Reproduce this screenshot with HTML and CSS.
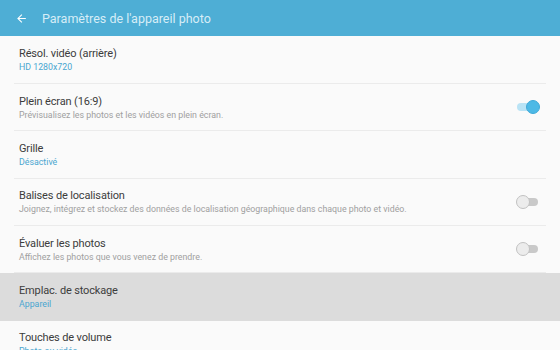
FILE: index.html
```html
<!DOCTYPE html>
<html lang="fr">
<head>
    <meta charset="UTF-8">
    <meta name="viewport" content="width=device-width, initial-scale=1.0">
    <title>Paramètres de l'appareil photo</title>
    <link rel="stylesheet" href="styles.css">
</head>
<body>
    <div class="header">
        <svg class="back-icon" viewBox="0 0 24 24">
            <path d="M20 11H7.8l5.6-5.6L12 4l-8 8 8 8 1.4-1.4L7.8 13H20z"/>
        </svg>
        <h3>Paramètres de l'appareil photo</h3>
    </div>

    <div class="settings-list">
        <div class="setting-row">
            <div class="setting-info">
                <h5>Résol. vidéo (arrière)</h5>
                <p class="value">HD 1280x720</p>
            </div>
        </div>

        <div class="setting-row">
            <div class="setting-info">
                <h5>Plein écran (16:9)</h5>
                <p>Prévisualisez les photos et les vidéos en plein écran.</p>
            </div>
            <div class="switch on"><span class="knob"></span></div>
        </div>

        <div class="setting-row">
            <div class="setting-info">
                <h5>Grille</h5>
                <p class="value">Désactivé</p>
            </div>
        </div>

        <div class="setting-row">
            <div class="setting-info">
                <h5>Balises de localisation</h5>
                <p>Joignez, intégrez et stockez des données de localisation géographique dans chaque photo et vidéo.</p>
            </div>
            <div class="switch"><span class="knob"></span></div>
        </div>

        <div class="setting-row">
            <div class="setting-info">
                <h5>Évaluer les photos</h5>
                <p>Affichez les photos que vous venez de prendre.</p>
            </div>
            <div class="switch"><span class="knob"></span></div>
        </div>

        <div class="setting-row pressed">
            <div class="setting-info">
                <h5>Emplac. de stockage</h5>
                <p class="value">Appareil</p>
            </div>
        </div>

        <div class="setting-row">
            <div class="setting-info">
                <h5>Touches de volume</h5>
                <p class="value">Photo ou vidéo</p>
            </div>
        </div>
    </div>
</body>
</html>
```

FILE: styles.css
```css
body {
    background-color: #fafafa;
    margin: 0;
    font-family: Roboto, "Liberation Sans", sans-serif;
    overflow: hidden;
}

.header {
    background-color: #4eaed5;
    height: 36px;
    display: flex;
    align-items: center;
    padding-left: 15px;
    box-sizing: border-box;
}

.back-icon {
    width: 13px;
    height: 13px;
    fill: #fff;
    margin-right: 14px;
}

.header h3 {
    margin: 0;
    font-size: 12.5px;
    font-weight: normal;
    color: #d6edf7;
}

.setting-row {
    height: 47.33px;
    margin: 0 14px;
    padding: 0 5px;
    border-bottom: 1px solid #ebebeb;
    box-sizing: border-box;
    display: flex;
    align-items: center;
}

.setting-row:first-child {
    height: 48px;
}

/* ligne pressée : fond gris sur toute la largeur */
.setting-row.pressed {
    margin: 0;
    padding: 0 19px;
    background-color: #dcdcdc;
    border-bottom-color: #dcdcdc;
}

.setting-info {
    flex-grow: 1;
}

.setting-info h5 {
    margin: 0;
    font-size: 11px;
    font-weight: normal;
    letter-spacing: -0.15px;
    color: #3c3c3c;
}

.setting-info p {
    margin: 2px 0 0;
    font-size: 8.8px;
    color: #a0a0a0;
}

.setting-info p.value {
    color: #4aa6d0;
}

.switch {
    position: relative;
    width: 21px;
    height: 8px;
    margin-right: 3px;
    border-radius: 4px;
    background-color: #c9c9c9;
}

.switch .knob {
    position: absolute;
    top: -3px;
    left: -1px;
    width: 12px;
    height: 12px;
    border-radius: 50%;
    background-color: #ececec;
    border: 1px solid #c2c2c2;
}

.switch.on {
    background-color: #b9e3f5;
}

.switch.on .knob {
    left: auto;
    right: -2px;
    background-color: #4db9e6;
    border-color: #3fa9d8;
}
```
